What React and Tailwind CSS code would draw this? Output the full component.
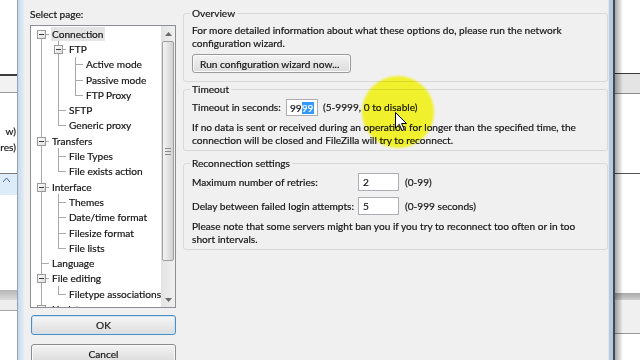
import React from 'react';

const rows = [
  { t: 'Connection', lvl: 0, box: true, sel: true, first: true, anc: [] },
  { t: 'FTP', lvl: 1, box: true, anc: [true] },
  { t: 'Active mode', lvl: 2, anc: [true, true] },
  { t: 'Passive mode', lvl: 2, anc: [true, true] },
  { t: 'FTP Proxy', lvl: 2, anc: [true, true], last: true },
  { t: 'SFTP', lvl: 1, anc: [true] },
  { t: 'Generic proxy', lvl: 1, anc: [true], last: true },
  { t: 'Transfers', lvl: 0, box: true, anc: [] },
  { t: 'File Types', lvl: 1, anc: [true] },
  { t: 'File exists action', lvl: 1, anc: [true], last: true },
  { t: 'Interface', lvl: 0, box: true, anc: [] },
  { t: 'Themes', lvl: 1, anc: [true] },
  { t: 'Date/time format', lvl: 1, anc: [true] },
  { t: 'Filesize format', lvl: 1, anc: [true] },
  { t: 'File lists', lvl: 1, anc: [true], last: true },
  { t: 'Language', lvl: 0, anc: [] },
  { t: 'File editing', lvl: 0, box: true, anc: [] },
  { t: 'Filetype associations', lvl: 1, anc: [true], last: true },
  { t: 'Updates', lvl: 0, box: true, anc: [] },
];

function Cell({ top, bottom, horiz, box }) {
  return (
    <div className="relative w-[17px] self-stretch shrink-0">
      {top && <div className="absolute left-[8px] top-0 h-1/2 w-px bg-[#a9a9a9]" />}
      {bottom && <div className="absolute left-[8px] top-1/2 bottom-0 w-px bg-[#a9a9a9]" />}
      {horiz && <div className="absolute left-[8px] right-[1px] top-1/2 h-px bg-[#a9a9a9]" />}
      {box && (
        <div className="absolute left-[4px] top-1/2 -mt-[4px] w-[9px] h-[9px] border border-[#9a9a9a] bg-gradient-to-br from-white to-[#dedede] flex items-center justify-center">
          <div className="w-[5px] h-px bg-[#3a3a3a]" />
        </div>
      )}
    </div>
  );
}

function Row({ r }) {
  const cells = [];
  for (let i = 0; i < r.lvl; i++) cells.push(<Cell key={i} top={r.anc[i]} bottom={r.anc[i]} />);
  cells.push(<Cell key="own" top={!r.first} bottom={!r.last} horiz box={r.box} />);
  return (
    <div className="flex h-[15.3px] items-center shrink-0">
      {cells}
      <span className={r.sel ? 'ml-[1px] px-[1px] pt-[1px] leading-[13px] whitespace-nowrap bg-[#e4e4e4]' : 'ml-[1px] px-[1px] pt-[1px] leading-[13px] whitespace-nowrap'}>{r.t}</span>
    </div>
  );
}

function Arrow({ up }) {
  return (
    <svg width="7" height="4" viewBox="0 0 7 4">
      {up ? <path d="M0 4 L3.5 0 L7 4 Z" fill="#6a6a6a" /> : <path d="M0 0 L3.5 4 L7 0 Z" fill="#6a6a6a" />}
    </svg>
  );
}

function Tree() {
  return (
    <div className="h-[283px] shrink-0 border border-[#8c8f96] bg-white flex">
      <div className="flex-1 pl-[2px] flex flex-col overflow-hidden">
        {rows.map((r, i) => <Row key={i} r={r} />)}
      </div>
      <div className="w-[14px] flex flex-col bg-gradient-to-r from-[#e3e3e3] to-[#f0f0f0]">
        <div className="h-[15px] flex items-center justify-center"><Arrow up /></div>
        <div className="mx-[1px] h-[220px] rounded-[2px] border border-[#9f9f9f] bg-gradient-to-r from-[#f4f4f4] to-[#d2d2d2] flex flex-col items-center justify-center gap-[2px]">
          <div className="w-[6px] h-px bg-[#8a8a8a]" />
          <div className="w-[6px] h-px bg-[#8a8a8a]" />
          <div className="w-[6px] h-px bg-[#8a8a8a]" />
        </div>
        <div className="flex-1" />
        <div className="h-[15px] flex items-center justify-center"><Arrow /></div>
      </div>
    </div>
  );
}

function Group({ title, children, className }) {
  return (
    <fieldset className={'border border-[#d9d9d9] rounded-[3px] pl-[6px] pr-[6px] ' + className}>
      <legend className="px-[2px] leading-[14px]">{title}</legend>
      {children}
    </fieldset>
  );
}

export default function App() {
  return (
    <div className="relative w-[640px] h-[360px] overflow-hidden flex bg-white text-[10.15px] text-[#111111] [-webkit-text-stroke:0.2px_#222222] font-['Lato','Noto_Sans',sans-serif]">
      {/* left background window */}
      <div className="w-[17px] flex flex-col shrink-0">
        <div className="h-[74px] bg-white" />
        <div className="h-[2px] bg-[#3d3d3d]" />
        <div className="h-[16px] bg-[#f2f2f2]" />
        <div className="h-px bg-[#9b9b9b]" />
        <div className="h-[80px] bg-white pt-[30px] leading-[16px]">
          <div className="flex justify-end pr-[1px] whitespace-nowrap">w)</div>
          <div className="flex justify-end pr-[1px] whitespace-nowrap">res)</div>
        </div>
        <div className="h-px bg-[#7a7a7a]" />
        <div className="h-[21px] bg-[#dcecf8] pl-[3px] pt-[4px]">
          <svg width="7" height="4" viewBox="0 0 7 4"><path d="M0 4 L3.5 0 L7 4" fill="none" stroke="#4a6a8a" strokeWidth="1" /></svg>
        </div>
        <div className="h-[95px] bg-white" />
        <div className="h-[10px] bg-gradient-to-b from-[#b5b5b5] to-[#dcdcdc]" />
        <div className="h-[10px] bg-[#eeeeee]" />
        <div className="h-px bg-[#a8a8a8]" />
        <div className="flex-1 bg-white" />
      </div>
      {/* left frame */}
      <div className="w-[7px] shrink-0 border-l border-[#90a4b9] bg-gradient-to-r from-[#c9d9ea] to-[#e4edf6]" />
      {/* dialog content */}
      <div className="flex-1 bg-[#f0f0f0] flex">
        <div className="w-[152px] pl-[6px] flex flex-col shrink-0">
          <div className="h-[25px] shrink-0 pt-[7px] leading-[14px]">Select page:</div>
          <Tree />
          <button className="mt-[7px] ml-px h-[20px] shrink-0 rounded-[3px] border border-[#4f8dbf] shadow-[inset_0_0_0_1px_#c9e6f8] bg-gradient-to-b from-[#f7f7f7] to-[#dcdcdc] leading-[14px]">OK</button>
          <button className="mt-[9px] ml-px h-[20px] shrink-0 rounded-[3px] border border-[#8c8c8c] shadow-[inset_0_0_0_1px_#fafafa] bg-gradient-to-b from-[#f4f4f4] to-[#dadada] leading-[14px]">Cancel</button>
        </div>
        <div className="ml-[7px] w-[425px] pt-[6px] flex flex-col shrink-0">
          <Group title="Overview" className="pb-[8px]">
            <div className="pl-[2px] mt-[4px] leading-[13px] whitespace-nowrap">
              For more detailed information about what these options do, please run the network<br />configuration wizard.
            </div>
            <button className="ml-[2px] mt-[4px] h-[19px] w-[159px] rounded-[3px] border border-[#9a9a9a] shadow-[inset_0_0_0_1px_#fbfbfb] bg-gradient-to-b from-[#f3f3f3] to-[#dcdcdc] text-left pl-[7px] leading-[14px]">
              Run configuration wizard now...
            </button>
          </Group>
          <Group title="Timeout" className="pb-[3px]">
            <div className="pl-[2px] mt-[2px] h-[18px] flex items-center whitespace-nowrap">
              <span className="w-[94px] pt-[2px]">Timeout in seconds:</span>
              <div className="w-[32px] h-[17px] border border-[#abadb3] bg-white flex items-center pl-[3px] pt-[1px] leading-[12px]">
                <span>99</span><span className="bg-[#3399ff] text-white [-webkit-text-stroke:0.2px_#ffffff]">99</span>
              </div>
              <span className="ml-[5px] pt-[2px]">(5-9999, 0 to disable)</span>
            </div>
            <div className="pl-[2px] mt-[5px] leading-[13px] whitespace-nowrap">
              If no data is sent or received during an operation for longer than the specified time, the<br />connection will be closed and FileZilla will try to reconnect.
            </div>
          </Group>
          <Group title="Reconnection settings" className="mt-[5px] pb-[3px]">
            <div className="pl-[2px] mt-[3px] h-[18px] flex items-center whitespace-nowrap">
              <span className="w-[166px] pt-[2px]">Maximum number of retries:</span>
              <div className="w-[41px] h-[18px] border border-[#abadb3] bg-white flex items-center pl-[4px] pt-[1px]">2</div>
              <span className="ml-[6px] pt-[2px]">(0-99)</span>
            </div>
            <div className="pl-[2px] mt-[6px] h-[18px] flex items-center whitespace-nowrap">
              <span className="w-[166px] pt-[2px]">Delay between failed login attempts:</span>
              <div className="w-[41px] h-[18px] border border-[#abadb3] bg-white flex items-center pl-[4px] pt-[1px]">5</div>
              <span className="ml-[6px] pt-[2px]">(0-999 seconds)</span>
            </div>
            <div className="pl-[2px] mt-[5px] leading-[13px] whitespace-nowrap">
              Please note that some servers might ban you if you try to reconnect too often or in too<br />short intervals.
            </div>
          </Group>
        </div>
      </div>
      {/* right frame */}
      <div className="w-[5px] shrink-0 border-l border-[#dfe7ef] bg-[#b8cadd]" />
      <div className="w-[2px] shrink-0 bg-[#3f4a55]" />
      {/* right background window */}
      <div className="relative flex-1 flex flex-col">
        <div className="h-[73px] bg-white" />
        <div className="h-px bg-[#3a3a3a]" />
        <div className="h-[19px] bg-[#e4e4e4]" />
        <div className="h-px bg-[#8a8a8a]" />
        <div className="h-[79px] bg-white" />
        <div className="h-px bg-[#555555]" />
        <div className="h-[119px] bg-white" />
        <div className="h-[7px] bg-gradient-to-b from-[#a9a9a9] to-[#cfcfcf]" />
        <div className="h-[33px] bg-[#f0f0f0]" />
        <div className="h-px bg-[#999999]" />
        <div className="flex-1 bg-white" />
        <div className="absolute left-0 top-0 bottom-0 w-[8px] bg-gradient-to-r from-[rgba(0,0,0,0.35)] to-transparent" />
      </div>
      {/* highlight and cursor */}
      <div className="absolute left-[362px] top-[76px] w-[72px] h-[72px] rounded-full bg-[#ffff30] mix-blend-multiply blur-[1px]" />
      <svg className="absolute left-[395px] top-[112px]" width="12" height="20" viewBox="0 0 12 20">
        <path d="M0.5 0.5 L0.5 16 L4.3 12.3 L7 18.5 L9.2 17.5 L6.6 11.5 L11.5 11.5 Z" fill="#fff" stroke="#000" strokeWidth="1" strokeLinejoin="round" />
      </svg>
    </div>
  );
}
